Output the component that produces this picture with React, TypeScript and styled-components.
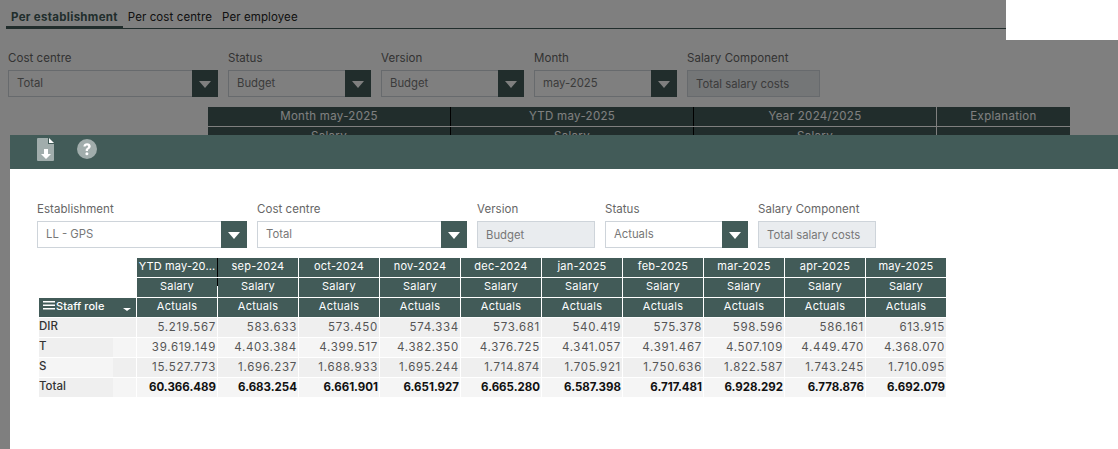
// App.tsx

import React from 'react';
import styled, { createGlobalStyle } from 'styled-components';

const MONTHS = [
  'YTD may-20...',
  'sep-2024',
  'oct-2024',
  'nov-2024',
  'dec-2024',
  'jan-2025',
  'feb-2025',
  'mar-2025',
  'apr-2025',
  'may-2025',
];

const ROWS = [
  {
    role: 'DIR',
    values: ['5.219.567', '583.633', '573.450', '574.334', '573.681', '540.419', '575.378', '598.596', '586.161', '613.915'],
  },
  {
    role: 'T',
    values: ['39.619.149', '4.403.384', '4.399.517', '4.382.350', '4.376.725', '4.341.057', '4.391.467', '4.507.109', '4.449.470', '4.368.070'],
  },
  {
    role: 'S',
    values: ['15.527.773', '1.696.237', '1.688.933', '1.695.244', '1.714.874', '1.705.921', '1.750.636', '1.822.587', '1.743.245', '1.710.095'],
  },
  {
    role: 'Total',
    total: true,
    values: ['60.366.489', '6.683.254', '6.661.901', '6.651.927', '6.665.280', '6.587.398', '6.717.481', '6.928.292', '6.778.876', '6.692.079'],
  },
];

const Field: React.FC<{ label: string; value: string; width: number; readOnly?: boolean }> = ({
  label,
  value,
  width,
  readOnly,
}) => (
  <FieldWrapper $width={width}>
    <FieldLabel>{label}</FieldLabel>
    <FieldBox $readOnly={readOnly}>
      <FieldValue $readOnly={readOnly}>{value}</FieldValue>
      {!readOnly && (
        <Caret>
          <CaretShape />
        </Caret>
      )}
    </FieldBox>
  </FieldWrapper>
);

const App: React.FC = () => {
  return (
    <Page>
      <GlobalStyle />
      <TabBar>
        <Tab $active>Per establishment</Tab>
        <Tab>Per cost centre</Tab>
        <Tab>Per employee</Tab>
      </TabBar>
      <Filters>
        <Field label='Cost centre' value='Total' width={210} />
        <Field label='Status' value='Budget' width={143} />
        <Field label='Version' value='Budget' width={143} />
        <Field label='Month' value='may-2025' width={143} />
        <Field label='Salary Component' value='Total salary costs' width={133} readOnly />
      </Filters>
      <BackTable>
        <BackHead $dark>Month may-2025</BackHead>
        <BackHead $dark>YTD may-2025</BackHead>
        <BackHead>Year 2024/2025</BackHead>
        <BackHead>Explanation</BackHead>
        <BackHead $dark>Salary</BackHead>
        <BackHead $dark>Salary</BackHead>
        <BackHead>Salary</BackHead>
        <BackHead />
      </BackTable>

      <Overlay />
      <CornerPatch />

      <Modal>
        <ModalHeader>
          <IconButton aria-label='Export'>
            <svg width='18' height='23' viewBox='0 0 18 23'>
              <path d='M1 0h10v6h6v16a1 1 0 0 1-1 1H1a1 1 0 0 1-1-1V1a1 1 0 0 1 1-1z' fill='#a1adac' />
              <path d='M12 0l5 5h-5z' fill='#ffffff' />
              <path d='M7 11h4v5h3l-5 5-5-5h3z' fill='#ffffff' />
            </svg>
          </IconButton>
          <IconButton aria-label='Help'>
            <svg width='20' height='20' viewBox='0 0 20 20'>
              <circle cx='10' cy='10' r='10' fill='#a1adac' />
              <path
                d='M6.4 7.4C6.6 5.4 8.1 4.3 10.1 4.3c2.1 0 3.6 1.2 3.6 3 0 1.3-.7 2-1.7 2.7-.8.5-1 .8-1 1.5v.4H8.7v-.6c0-1.1.4-1.7 1.3-2.3.8-.5 1.2-.9 1.2-1.5 0-.7-.5-1.1-1.2-1.1-.8 0-1.3.5-1.4 1.2z'
                fill='#ffffff'
              />
              <circle cx='9.9' cy='14.7' r='1.5' fill='#ffffff' />
            </svg>
          </IconButton>
        </ModalHeader>
        <ModalBody>
          <ModalFilters>
            <Field label='Establishment' value='LL - GPS' width={210} />
            <Field label='Cost centre' value='Total' width={210} />
            <Field label='Version' value='Budget' width={118} readOnly />
            <Field label='Status' value='Actuals' width={143} />
            <Field label='Salary Component' value='Total salary costs' width={118} readOnly />
          </ModalFilters>
          <PivotTable>
            <BlankCell />
            {MONTHS.map((month, i) => (
              <HeadCell key={month} $tight={i === 0} $dark={i === 0}>
                {month}
              </HeadCell>
            ))}
            <BlankCell />
            {MONTHS.map((month, i) => (
              <HeadCell key={month} $stub={i === 0}>
                Salary
              </HeadCell>
            ))}
            <RoleHead>
              <RoleTitle>
                <svg width='12' height='9' viewBox='0 0 12 9'>
                  <path d='M0 0h12v1.6H0zM0 3.5h12v1.6H0zM0 7h12v1.6H0z' fill='#ffffff' />
                </svg>
                Staff role
              </RoleTitle>
              <SmallCaret />
            </RoleHead>
            {MONTHS.map((month) => (
              <HeadCell key={month}>Actuals</HeadCell>
            ))}
            {ROWS.map((row, r) => (
              <React.Fragment key={row.role}>
                <LabelCell $odd={r % 2 === 1}>
                  <LabelText $odd={r % 2 === 1} $flat={r === 0}>
                    {row.role}
                  </LabelText>
                </LabelCell>
                {row.values.map((value) => (
                  <ValueCell key={value} $odd={r % 2 === 1} $total={row.total}>
                    {value}
                  </ValueCell>
                ))}
              </React.Fragment>
            ))}
          </PivotTable>
        </ModalBody>
      </Modal>
    </Page>
  );
};

const GlobalStyle = createGlobalStyle`
  html, body {
    margin: 0;
    padding: 0;
    background: #ffffff;
    overflow: hidden;
  }
  * {
    box-sizing: border-box;
  }
`;

const Page = styled.div`
  position: relative;
  width: 1118px;
  height: 449px;
  overflow: hidden;
  background: #ffffff;
  font-family: Inter, 'Liberation Sans', sans-serif;
  font-size: 11px;
  color: #444;
`;

const TabBar = styled.div`
  display: flex;
  height: 29px;
  margin: 0 112px 0 6px;
  padding-top: 9px;
  border-bottom: 1px solid #425b58;
`;

const Tab = styled.div<{ $active?: boolean }>`
  height: 20px;
  padding: 0 5px;
  line-height: 17px;
  font-size: 11.5px;
  letter-spacing: ${(p) => (p.$active ? '0.3px' : '0.1px')};
  font-weight: ${(p) => (p.$active ? 700 : 400)};
  color: ${(p) => (p.$active ? '#425b58' : '#222')};
  border-bottom: ${(p) => (p.$active ? '3px solid #425b58' : 'none')};
`;

const Filters = styled.div`
  display: flex;
  gap: 10px;
  margin-top: 21px;
  padding-left: 8px;
`;

const FieldWrapper = styled.div<{ $width: number }>`
  width: ${(p) => p.$width}px;
  flex: none;
`;

const FieldLabel = styled.div`
  height: 20px;
  line-height: 16px;
  font-size: 11.5px;
  letter-spacing: 0.05px;
  color: #666;
  white-space: nowrap;
`;

const FieldBox = styled.div<{ $readOnly?: boolean }>`
  display: flex;
  align-items: stretch;
  height: 27px;
  border: 1px solid #ced4da;
  background: ${(p) => (p.$readOnly ? '#e9ecef' : '#ffffff')};
`;

const FieldValue = styled.div<{ $readOnly?: boolean }>`
  flex: 1;
  padding-left: 8px;
  line-height: ${(p) => (p.$readOnly ? '26px' : '25px')};
  font-size: 11.3px;
  color: #777;
  white-space: nowrap;
`;

const Caret = styled.div`
  display: flex;
  align-items: center;
  justify-content: center;
  width: 26px;
  margin: -1px -1px -1px 0;
  background: #425b58;
`;

const CaretShape = styled.span`
  width: 0;
  height: 0;
  margin-top: 1px;
  border-left: 6.5px solid transparent;
  border-right: 6.5px solid transparent;
  border-top: 7px solid #ffffff;
`;

const BackTable = styled.div`
  display: grid;
  grid-template-columns: 242px 242px 242px 133px;
  grid-auto-rows: 19px;
  gap: 1px;
  width: 862px;
  margin: 10px 0 0 208px;
`;

const BackHead = styled.div<{ $dark?: boolean }>`
  background: #425b58;
  color: #ffffff;
  text-align: center;
  line-height: 19px;
  font-size: 11.5px;
  letter-spacing: 0.3px;
  box-shadow: ${(p) => (p.$dark ? '1px 0 0 #000' : 'none')};
`;

const Overlay = styled.div`
  position: absolute;
  inset: 0;
  background: rgba(0, 0, 0, 0.5);
`;

const CornerPatch = styled.div`
  position: absolute;
  top: 0;
  right: 0;
  width: 112px;
  height: 40px;
  background: #ffffff;
`;

const Modal = styled.div`
  position: absolute;
  top: 135px;
  left: 10px;
  right: 0;
  bottom: 0;
  background: #ffffff;
`;

const ModalHeader = styled.div`
  display: flex;
  align-items: center;
  gap: 21px;
  height: 34px;
  padding: 0 0 6px 26px;
  background: #425b58;
`;

const IconButton = styled.div`
  display: flex;
  width: 20px;
  justify-content: center;
`;

const ModalBody = styled.div`
  padding: 32px 0 0 27px;
`;

const ModalFilters = styled.div`
  display: flex;
  gap: 10px;
`;

const PivotTable = styled.div`
  display: grid;
  grid-template-columns: 97px repeat(10, 80px);
  grid-auto-rows: 19px;
  gap: 1px;
  width: 908px;
  margin: 10px 0 0 2px;
`;

const BlankCell = styled.div`
  background: #ffffff;
`;

const HeadCell = styled.div<{ $tight?: boolean; $dark?: boolean; $stub?: boolean }>`
  position: relative;
  background: #425b58;
  color: #ffffff;
  text-align: center;
  line-height: 17px;
  font-size: 11px;
  white-space: nowrap;
  letter-spacing: ${(p) => (p.$tight ? '0.15px' : '0.25px')};
  box-shadow: ${(p) => (p.$dark ? '1px 0 0 #000' : 'none')};

  &::after {
    content: '';
    display: ${(p) => (p.$stub ? 'block' : 'none')};
    position: absolute;
    top: 0;
    right: -1px;
    width: 1px;
    height: 8px;
    background: #000;
  }
`;

const RoleHead = styled.div`
  display: flex;
  align-items: center;
  justify-content: space-between;
  padding: 0 5px 0 4px;
  background: #425b58;
  color: #ffffff;
  font-size: 11px;
  font-weight: 500;
  letter-spacing: 0.05px;
`;

const RoleTitle = styled.span`
  display: flex;
  align-items: center;
  gap: 1px;
  margin-top: -4px;
`;

const SmallCaret = styled.span`
  width: 0;
  height: 0;
  margin: 3px 0 0;
  border-left: 4px solid transparent;
  border-right: 4px solid transparent;
  border-top: 3.5px solid #ffffff;
`;

const LabelCell = styled.div<{ $odd?: boolean }>`
  background: ${(p) => (p.$odd ? '#f5f5f5' : '#efefef')};
`;

const LabelText = styled.div<{ $odd?: boolean; $flat?: boolean }>`
  width: 74px;
  height: 19px;
  line-height: 16px;
  font-size: 11.5px;
  font-weight: 500;
  color: #333;
  background: ${(p) => (p.$flat ? 'transparent' : p.$odd ? '#efefef' : '#f5f5f5')};
`;

const ValueCell = styled.div<{ $odd?: boolean; $total?: boolean }>`
  padding-right: 1px;
  background: ${(p) => (p.$odd ? '#f5f5f5' : '#efefef')};
  text-align: right;
  line-height: 19px;
  font-size: 11.5px;
  letter-spacing: ${(p) => (p.$total ? '0' : '0.7px')};
  color: ${(p) => (p.$total ? '#111' : '#555')};
  font-weight: ${(p) => (p.$total ? 700 : 400)};
`;

export default App;
